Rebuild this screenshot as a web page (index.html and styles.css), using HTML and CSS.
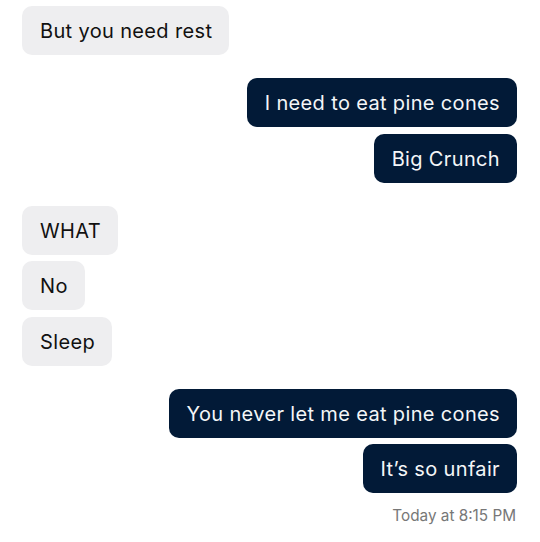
FILE: index.html
```html
<!DOCTYPE html>
<html>
<head>
<meta charset="utf-8">
<link rel="stylesheet" href="styles.css">
</head>
<body>
<div class="chat">
  <div class="group theirs">
    <div class="bubble">But you need rest</div>
  </div>
  <div class="group mine">
    <div class="bubble">I need to eat pine cones</div>
    <div class="bubble">Big Crunch</div>
  </div>
  <div class="group theirs">
    <div class="bubble">WHAT</div>
    <div class="bubble">No</div>
    <div class="bubble">Sleep</div>
  </div>
  <div class="group mine">
    <div class="bubble">You never let me eat pine cones</div>
    <div class="bubble">It’s so unfair</div>
    <div class="stamp">Today at 8:15 PM</div>
  </div>
</div>
</body>
</html>
```
FILE: styles.css
```css
html, body {
  margin: 0;
  background: #fff;
}
.chat {
  padding: 6px 23px 0 22px;
  display: flex;
  flex-direction: column;
  gap: 23px;
  font-family: Inter, "Liberation Sans", sans-serif;
}
.group {
  display: flex;
  flex-direction: column;
  gap: 6.5px;
}
.theirs { align-items: flex-start; }
.mine { align-items: flex-end; }
.bubble {
  box-sizing: border-box;
  height: 49px;
  line-height: 50px;
  padding: 0 17px 0 18px;
  border-radius: 10px;
  font-size: 20px;
  letter-spacing: 0.35px;
  white-space: nowrap;
}
.theirs .bubble {
  background: #eeeef0;
  color: #111;
}
.mine .bubble {
  background: #021a37;
  color: #f4f6f8;
}
.stamp {
  margin-top: 6px;
  padding-right: 1px;
  font-size: 15.3px;
  color: #777;
  line-height: 20px;
}
```
